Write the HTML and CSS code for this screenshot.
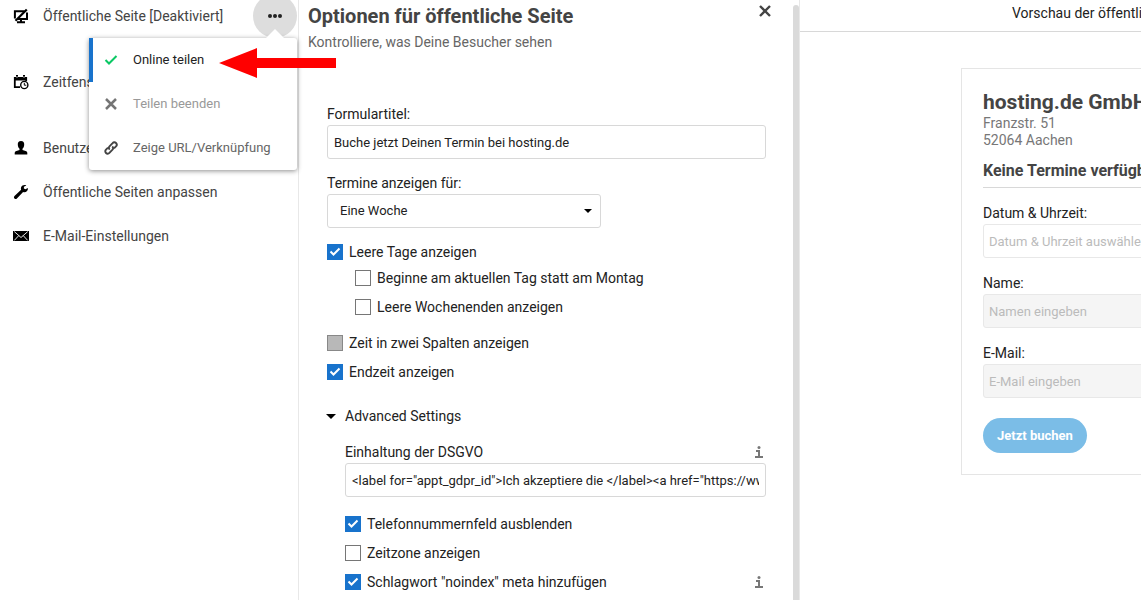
FILE: index.html
```html
<!DOCTYPE html>
<html lang="de">
<head>
<meta charset="utf-8">
<meta name="viewport" content="width=device-width, initial-scale=1">
<title>Optionen für öffentliche Seite</title>
<link rel="stylesheet" href="styles.css">
</head>
<body>
<div class="app">
  <nav class="sidebar">
    <div class="nav-item nav-item-spaced">
      <svg class="nav-icon" viewBox="0 0 16 16"><path d="M1.900 10.500V3.200h9.600M5 11h9V4.500M4 14.200h8M8 11.500v2.500" fill="none" stroke="#000" stroke-width="2"/><path d="M2.500 12.700L13.800 1.500" stroke="#000" stroke-width="2.200"/></svg>
      <a class="nav-link" href="#">Öffentliche Seite [Deaktiviert]</a>
      <button class="more" type="button" aria-label="Mehr"><svg viewBox="0 0 14 4" width="14" height="4"><circle cx="2" cy="2" r="2"/><circle cx="7" cy="2" r="2"/><circle cx="12" cy="2" r="2"/></svg></button>
      <div class="menu">
        <button class="menu-item menu-active" type="button">
          <svg class="menu-icon" viewBox="0 0 14 14"><path d="M1.500 7L5 10.500 12.500 3" fill="none" stroke="#0ac864" stroke-width="2"/></svg>Online teilen</button>
        <button class="menu-item menu-disabled" type="button" disabled>
          <svg class="menu-icon" viewBox="0 0 14 14"><path d="M2 2l10 10M12 2L2 12" stroke="#757575" stroke-width="2.500"/></svg>Teilen beenden</button>
        <button class="menu-item" type="button">
          <svg class="menu-icon" viewBox="0 0 14 14"><g fill="none" stroke="#444" stroke-width="1.900"><path d="M5.800 8.600C4.600 7.600 4.600 6.300 5.500 5.300L8.600 2.200C9.600 1.100 11 1 12 2s1 2.300 0 3.300L10 7.300"/><path d="M8.200 5.400C9.400 6.400 9.400 7.700 8.500 8.700L5.400 11.800C4.400 12.900 3 13 2 12s-1-2.300 0-3.300L4 6.700"/></g></svg>Zeige URL/Verknüpfung</button>
      </div>
    </div>
    <div class="nav-item nav-item-spaced">
      <svg class="nav-icon" viewBox="0 0 16 16"><path d="M7 13.200H1.800V4h11.400v3" fill="none" stroke="#000" stroke-width="1.800"/><path d="M1 3h13v3.500H1zM3 1h2v3H3zM10 1h2v3h-2z"/><path d="M4 2v2M11 2v2" stroke="#fff" stroke-width=".7"/><circle cx="11.300" cy="11" r="3.600" fill="#fff" stroke="#000" stroke-width="1.400"/><path d="M11.300 8.800v2.400h2" fill="none" stroke="#000"/></svg>
      <a class="nav-link" href="#">Zeitfenster</a>
    </div>
    <div class="nav-item">
      <svg class="nav-icon" viewBox="0 0 16 16"><path d="M8 1c2.300 0 3.400 1.500 3.200 3.700C11.100 6.500 10.400 8 9.500 8.800v1.200l3.800 1.300c.7.300 1 .9 1 1.700v1.500H1.700V13c0-.8.300-1.400 1-1.700L6.500 10V8.800C5.600 8 4.900 6.500 4.800 4.700 4.600 2.500 5.700 1 8 1z"/></svg>
      <a class="nav-link" href="#">Benutzer</a>
    </div>
    <div class="nav-item">
      <svg class="nav-icon" viewBox="0 0 16 16"><path d="M14.900 3.900l-2.500 1.400-1.500-.9v-1.600l2.400-1.400C11.300.6 8.900 1.300 8.100 3.300c-.3.900-.3 1.700 0 2.500L1.500 12c-.8.800-.7 1.800 0 2.500s1.700.7 2.400-.1l6.200-6.400c2.600.9 5.200-1.100 4.800-4.100z"/></svg>
      <a class="nav-link" href="#">Öffentliche Seiten anpassen</a>
    </div>
    <div class="nav-item">
      <svg class="nav-icon" viewBox="0 0 16 16"><path d="M0 3h16v10H0z"/><path d="M1.300 3.600L8 9.500l6.700-5.900M1.300 12.400l4.400-4.700M14.700 12.400l-4.400-4.700" fill="none" stroke="#fff" stroke-width=".9"/></svg>
      <a class="nav-link" href="#">E-Mail-Einstellungen</a>
    </div>
    <svg class="pointer" viewBox="0 0 117 30" width="117" height="30"><path d="M0 15L38 0v10h79v10H38v10z" fill="#f00"/></svg>
  </nav>

  <main class="options">
    <header class="options-head">
      <div>
        <h1 class="title">Optionen für öffentliche Seite</h1>
        <p class="subtitle">Kontrolliere, was Deine Besucher sehen</p>
      </div>
      <button class="close" type="button" aria-label="Schließen"><svg viewBox="0 0 12 12" width="12" height="12"><path d="M1 1l10 10M11 1L1 11" stroke="#444" stroke-width="2.400"/></svg></button>
    </header>
    <form class="form">
      <label class="label" for="formtitle">Formulartitel:</label>
      <input class="field" id="formtitle" type="text" value="Buche jetzt Deinen Termin bei hosting.de">
      <label class="label label-next" for="range">Termine anzeigen für:</label>
      <select class="field select" id="range"><option>Eine Woche</option></select>
      <div class="checks">
        <label class="check"><input type="checkbox" checked>Leere Tage anzeigen</label>
        <div class="nested">
          <label class="check"><input type="checkbox">Beginne am aktuellen Tag statt am Montag</label>
          <label class="check"><input type="checkbox">Leere Wochenenden anzeigen</label>
        </div>
        <label class="check"><input type="checkbox" disabled>Zeit in zwei Spalten anzeigen</label>
        <label class="check"><input type="checkbox" checked>Endzeit anzeigen</label>
      </div>
      <details class="advanced" open>
        <summary class="summary">Advanced Settings</summary>
        <div class="advanced-body">
          <div class="with-info">
            <label class="label" for="gdpr">Einhaltung der DSGVO</label>
            <svg class="info" viewBox="0 0 8 12"><circle cx="4" cy="1.500" r="1.500"/><path d="M1 4h4v6h3v2H0v-2h3V6H1z"/></svg>
          </div>
          <input class="field" id="gdpr" type="text" value='&lt;label for="appt_gdpr_id"&gt;Ich akzeptiere die &lt;/label&gt;&lt;a href="https://www.hosting.de/datenschutz"&gt;'>
          <div class="checks checks-advanced">
            <label class="check"><input type="checkbox" checked>Telefonnummernfeld ausblenden</label>
            <label class="check"><input type="checkbox">Zeitzone anzeigen</label>
            <div class="with-info">
              <label class="check"><input type="checkbox" checked>Schlagwort "noindex" meta hinzufügen</label>
              <svg class="info" viewBox="0 0 8 12"><circle cx="4" cy="1.500" r="1.500"/><path d="M1 4h4v6h3v2H0v-2h3V6H1z"/></svg>
            </div>
          </div>
        </div>
      </details>
    </form>
  </main>
  <div class="scrollbar"></div>

  <section class="preview">
    <h2 class="preview-head">Vorschau der öffentlichen Seite</h2>
    <form class="card">
      <h3 class="company">hosting.de GmbH</h3>
      <p class="address">Franzstr. 51<br>52064 Aachen</p>
      <h4 class="notice">Keine Termine verfügbar</h4>
      <label class="label" for="date">Datum &amp; Uhrzeit:</label>
      <input class="field preview-field" id="date" type="text" placeholder="Datum &amp; Uhrzeit auswählen">
      <label class="label preview-label" for="name">Name:</label>
      <input class="field preview-field" id="name" type="text" placeholder="Namen eingeben" disabled>
      <label class="label preview-label" for="mail">E-Mail:</label>
      <input class="field preview-field" id="mail" type="email" placeholder="E-Mail eingeben" disabled>
      <button class="book" type="button">Jetzt buchen</button>
    </form>
  </section>
</div>
</body>
</html>
```
FILE: styles.css
```css
* { box-sizing: border-box; }
body {
  margin: 0;
  font: 14px/20px Roboto, "Liberation Sans", sans-serif;
  color: #222;
  background: #fff;
}
button, input, select { font: inherit; color: inherit; }
h1, h2, h3, h4, p { margin: 0; }
.app { display: flex; height: 100vh; overflow: hidden; }

/* Navigation */
.sidebar {
  position: relative;
  z-index: 1;
  flex: 0 0 299px;
  border-right: 1px solid #e8e8e8;
}
.nav-item {
  position: relative;
  display: flex;
  align-items: center;
  gap: 14px;
  height: 44px;
  padding: 0 1px 0 13px;
}
.nav-item:first-child { margin-top: -6px; }
.nav-item-spaced { margin-bottom: 22px; }
.nav-icon { flex: none; width: 16px; height: 16px; }
.nav-link { flex: 1; color: #444; text-decoration: none; white-space: nowrap; }
.more {
  display: grid;
  place-items: center;
  width: 44px;
  height: 44px;
  padding: 0;
  border: 0;
  border-radius: 50%;
  background: #ddd;
  fill: #222;
}
.menu {
  position: absolute;
  z-index: 2;
  top: 100%;
  left: 89px;
  right: 1px;
  border-radius: 3px;
  background: #fff;
  box-shadow: 0 1px 5px rgba(0, 0, 0, .45);
}
.menu::before {
  content: "";
  position: absolute;
  right: 13px;
  bottom: 100%;
  border: solid transparent;
  border-width: 0 9px 9px;
  border-bottom-color: #fff;
}
.menu-item {
  display: flex;
  align-items: center;
  gap: 15px;
  width: 100%;
  height: 44px;
  padding: 0 11px;
  border: 0;
  border-left: 4px solid transparent;
  background: none;
  color: #666;
  font-size: 13px;
  white-space: nowrap;
}
.menu-active { border-left-color: #1873cc; color: #222; }
.menu-disabled { color: #999; }
.menu-icon { flex: none; width: 14px; height: 14px; }
.pointer { position: absolute; z-index: 3; left: 219px; top: 48px; }

/* Options */
.options { flex: 0 0 494px; padding: 4px 27px 0 9px; overflow: hidden; }
.options-head { display: flex; justify-content: space-between; align-items: flex-start; }
.title { font-size: 20px; line-height: 24px; color: #444; }
.subtitle { margin-top: 4px; color: #666; }
.close { display: flex; margin-right: -5px; padding: 1px 0; border: 0; background: none; }
.form { margin: 51px 0 0 19px; }
.label { display: block; line-height: 22px; }
.label-next { margin-top: 13px; }
.field {
  display: block;
  width: 100%;
  height: 34px;
  padding: 0 6px;
  border: 1px solid #d8d8d8;
  border-radius: 3px;
  background: #fff;
  font-size: 13px;
}
.select {
  width: 274px;
  padding: 0 12px;
  appearance: none;
  background: #fff url("data:image/svg+xml,%3Csvg xmlns='http://www.w3.org/2000/svg' width='8' height='4'%3E%3Cpath d='M0 0h8L4 4z'/%3E%3C/svg%3E") no-repeat right 8px center;
}
.checks { display: flex; flex-direction: column; gap: 9px; padding-top: 14px; }
.check { display: flex; align-items: center; gap: 6px; }
.check input {
  appearance: none;
  flex: none;
  width: 16px;
  height: 16px;
  margin: 0;
  border: 1px solid #767676;
  background: #fff;
}
.check input:checked {
  border-color: #1873cc;
  background: #1873cc url("data:image/svg+xml,%3Csvg xmlns='http://www.w3.org/2000/svg' width='12' height='12'%3E%3Cpath d='M1.500 5.500l3 3 6-6' fill='none' stroke='%23fff' stroke-width='2'/%3E%3C/svg%3E") no-repeat center;
}
.check input:disabled { border-color: #888; background: #b8b8b8; }
.nested {
  display: flex;
  flex-direction: column;
  gap: 9px;
  margin: -3px 0 7px 28px;
}
.advanced { margin-top: 24px; }
.summary { display: flex; align-items: center; gap: 9px; margin-left: -1px; list-style: none; }
.summary::before {
  content: "";
  border: solid transparent;
  border-width: 5px 5px 0;
  border-top-color: #000;
}
.advanced-body { padding: 15px 0 0 18px; }
.with-info { display: flex; align-items: center; justify-content: space-between; padding-right: 3px; }
.info { width: 8px; height: 12px; fill: #777; }
.checks-advanced { padding-top: 17px; }
.scrollbar {
  flex: 0 0 6px;
  margin-top: 5px;
  border-radius: 3px 3px 0 0;
  background: #dadada;
}

/* Preview */
.preview { flex: 1; min-width: 0; overflow: hidden; border-left: 1px solid #e8e8e8; white-space: nowrap; }
.preview-head {
  height: 32px;
  padding: 3px 0 0 212px;
  border-bottom: 1px solid #d8d8d8;
  font-size: 14px;
  font-weight: 400;
}
.card {
  min-width: 400px;
  margin: 36px 0 0 161px;
  padding: 21px;
  border: 1px solid #e5e5e5;
}
.company { font-size: 21px; line-height: 24px; color: #444; }
.address { margin-top: 1px; line-height: 17px; color: #777; }
.notice {
  margin: 12px 0 14px;
  padding-bottom: 6px;
  border-bottom: 1px solid #d8d8d8;
  font-size: 16px;
  color: #444;
}
.preview-label { margin-top: 14px; }
.preview-field { padding: 0 5px; border-color: #e8e8e8; }
.preview-field:disabled { background: #f5f5f5; }
.preview-field::placeholder { color: #bbb; opacity: 1; }
.book {
  height: 35px;
  margin-top: 20px;
  padding: 0 14px;
  border: 0;
  border-radius: 18px;
  background: #7bbde7;
  color: #fff;
  font-size: 13px;
  font-weight: 700;
}
```
